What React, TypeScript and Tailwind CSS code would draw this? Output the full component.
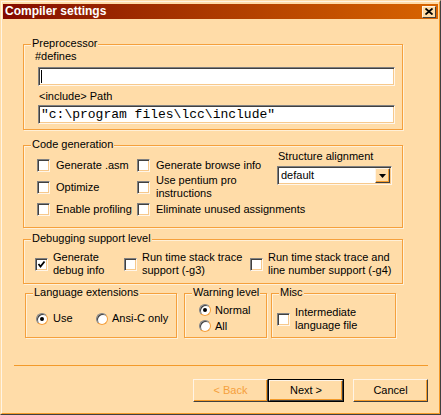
import React from 'react';

const Check = ({ checked = false }: { checked?: boolean }) => (
  <span className="w-[13px] h-[13px] shrink-0 bg-white border border-t-[#808080] border-l-[#808080] border-r-[#fff6ea] border-b-[#fff6ea] shadow-[inset_1px_1px_0_#404040,inset_-1px_-1px_0_#f7c98c] flex items-center justify-center">
    {checked && (
      <svg width="9" height="9" viewBox="0 0 9 9">
        <polyline points="1.5,4 3.5,6.5 7.5,1.5" fill="none" stroke="#000" strokeWidth="1.8" />
      </svg>
    )}
  </span>
);

const Radio = ({ checked = false }: { checked?: boolean }) => (
  <span className="w-[12px] h-[12px] shrink-0 rounded-full bg-white border border-t-[#808080] border-l-[#808080] border-r-[#f5a03c] border-b-[#f5a03c] shadow-[inset_1px_1px_0_#404040] flex items-center justify-center">
    {checked && <span className="w-[4px] h-[4px] rounded-full bg-black" />}
  </span>
);

const Group = ({ label, className, children }: { label: string; className: string; children?: React.ReactNode }) => (
  <div className={`relative border border-[#f5a03c] shadow-[1px_1px_0_#fff0d8,inset_1px_1px_0_#fff0d8] ${className}`}>
    <span className="absolute -top-[8px] left-[7px] px-[1px] leading-[13px] bg-[#ffdca8]">{label}</span>
    {children}
  </div>
);

const Sunken = ({ className, children }: { className: string; children?: React.ReactNode }) => (
  <div className={`bg-white border border-t-[#808080] border-l-[#808080] border-r-[#fff6ea] border-b-[#fff6ea] shadow-[inset_1px_1px_0_#404040,inset_-1px_-1px_0_#f7c98c] ${className}`}>
    {children}
  </div>
);

const Button = ({ label, disabled = false }: { label: string; disabled?: boolean }) => (
  <div className={`h-full flex items-center justify-center bg-[#ffdca8] border border-t-[#fff4e6] border-l-[#fff4e6] border-r-[#404040] border-b-[#404040] shadow-[inset_-1px_-1px_0_#f39a2a] ${disabled ? 'text-[#f5a03c]' : 'text-black'}`}>
    {label}
  </div>
);

export default function App() {
  return (
    <div className="w-[441px] h-[415px] bg-[#ffdca8] border border-t-[#ffdca8] border-l-[#ffdca8] border-r-[#404040] border-b-[#404040] font-['Liberation_Sans',Arial,sans-serif] text-[11px] leading-[13px] text-black">
      <div className="h-full border border-t-[#fff4e4] border-l-[#fff4e4] border-r-[#f39a2a] border-b-[#f39a2a] p-px flex flex-col">
        {/* Title bar */}
        <div className="mt-px h-[15px] flex items-center justify-between bg-gradient-to-r from-[#840800] to-[#d86400]">
          <span className="pl-[2px] text-white font-bold text-[12px] leading-[15px]">Compiler settings</span>
          <span className="mr-[2px] w-[14px] h-[12px] bg-[#ffdca8] border border-t-[#fff4e6] border-l-[#fff4e6] border-r-[#404040] border-b-[#404040] flex items-center justify-center">
            <svg width="8" height="7" viewBox="0 0 8 7">
              <path d="M0.5 0.5 L7.5 6.5 M7.5 0.5 L0.5 6.5" stroke="#000" strokeWidth="1.8" />
            </svg>
          </span>
        </div>

        {/* Preprocessor */}
        <Group label="Preprocessor" className="mt-[25px] ml-[20px] w-[380px] h-[86px]">
          <div className="pt-[5px] pl-[11px] flex flex-col">
            <span>#defines</span>
            <Sunken className="mt-[4px] ml-[3px] w-[357px] h-[19px] flex items-center pl-[2px]">
              <span className="w-px h-[13px] bg-black" />
            </Sunken>
            <span className="mt-[4px] ml-[4px]">&lt;include&gt; Path</span>
            <Sunken className="mt-[2px] ml-[3px] w-[357px] h-[19px] flex items-center pl-[2px]">
              <span className="font-['Liberation_Mono','Courier_New',monospace] text-[13px] leading-[15px]">"c:\program files\lcc\include"</span>
            </Sunken>
          </div>
        </Group>

        {/* Code generation */}
        <Group label="Code generation" className="mt-[15px] ml-[20px] w-[380px] h-[83px]">
          <div className="flex">
            <div className="pt-[8px] pl-[13px] grid grid-cols-[100px_140px] auto-rows-[22px]">
              <div className="flex items-center gap-[6px]"><Check /><span>Generate .asm</span></div>
              <div className="flex items-center gap-[6px]"><Check /><span>Generate browse info</span></div>
              <div className="flex items-center gap-[6px]"><Check /><span>Optimize</span></div>
              <div className="flex items-center gap-[6px]"><Check /><span>Use pentium pro<br />instructions</span></div>
              <div className="flex items-center gap-[6px]"><Check /><span>Enable profiling</span></div>
              <div className="flex items-center gap-[6px] whitespace-nowrap"><Check /><span>Eliminate unused assignments</span></div>
            </div>
            <div className="pt-[4px] flex flex-col">
              <span className="ml-[1px]">Structure alignment</span>
              <Sunken className="mt-[3px] w-[115px] h-[19px] flex items-center justify-between pl-[3px] pr-px">
                <span>default</span>
                <span className="w-[15px] h-[15px] bg-[#ffdca8] border border-t-[#fff4e6] border-l-[#fff4e6] border-r-[#404040] border-b-[#404040] shadow-[inset_-1px_-1px_0_#f39a2a] flex items-center justify-center">
                  <svg width="7" height="4" viewBox="0 0 7 4"><path d="M0 0 H7 L3.5 4 Z" fill="#000" /></svg>
                </span>
              </Sunken>
            </div>
          </div>
        </Group>

        {/* Debugging support level */}
        <Group label="Debugging support level" className="mt-[11px] ml-[20px] w-[380px] h-[45px]">
          <div className="pt-[11px] pl-[11px] flex">
            <div className="w-[89px] flex items-center gap-[5px]"><Check checked /><span>Generate<br />debug info</span></div>
            <div className="w-[126px] flex items-center gap-[5px]"><Check /><span>Run time stack trace<br />support (-g3)</span></div>
            <div className="flex items-center gap-[5px]"><Check /><span>Run time stack trace and<br />line number support (-g4)</span></div>
          </div>
        </Group>

        {/* Bottom groups */}
        <div className="mt-[9px] ml-[22px] flex">
          <Group label="Language extensions" className="w-[152px] h-[45px]">
            <div className="pt-[18px] pl-[10px] flex">
              <div className="w-[60px] flex items-center gap-[5px]"><Radio checked /><span>Use</span></div>
              <div className="flex items-center gap-[4px]"><Radio /><span>Ansi-C only</span></div>
            </div>
          </Group>
          <Group label="Warning level" className="ml-[7px] w-[83px] h-[45px]">
            <div className="pt-[8px] pl-[14px] flex flex-col">
              <div className="h-[16px] flex items-center gap-[4px]"><Radio checked /><span>Normal</span></div>
              <div className="h-[16px] flex items-center gap-[4px]"><Radio /><span>All</span></div>
            </div>
          </Group>
          <Group label="Misc" className="ml-[4px] w-[125px] h-[45px]">
            <div className="pt-[12px] pl-[5px] flex items-center gap-[5px]">
              <Check /><span>Intermediate<br />language file</span>
            </div>
          </Group>
        </div>

        {/* Separator */}
        <div className="mt-[27px] ml-[11px] w-[414px] h-px bg-[#f39a2a]" />

        {/* Buttons */}
        <div className="mt-[13px] ml-[190px] h-[23px] flex">
          <div className="w-[75px]"><Button label="< Back" disabled /></div>
          <div className="w-[76px] border border-black"><Button label="Next >" /></div>
          <div className="ml-[9px] w-[75px]"><Button label="Cancel" /></div>
        </div>
      </div>
    </div>
  );
}
